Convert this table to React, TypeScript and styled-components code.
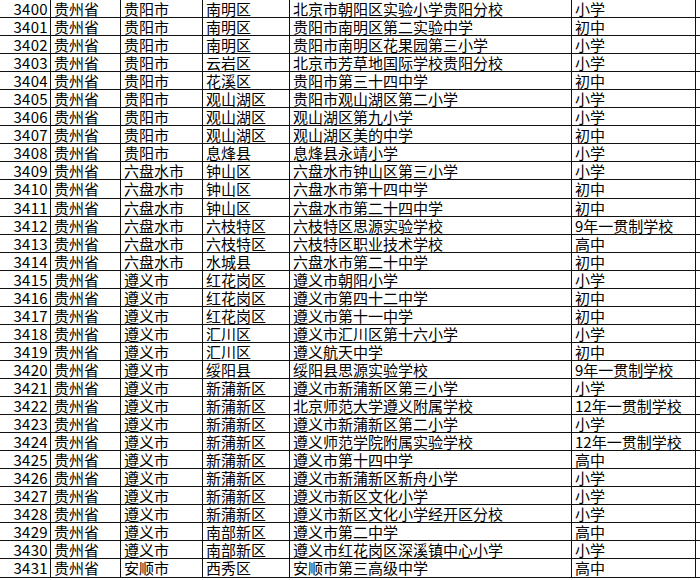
import React from "react";
import styled, { createGlobalStyle } from "styled-components";

const Global = createGlobalStyle`
  html, body { margin: 0; padding: 0; background: #ffffff; }
  body { font-family: "Noto Sans CJK SC", "Noto Sans", sans-serif; }
`;

const COLS = "51px 70px 82px 87px 282px 124px";

const Sheet = styled.div`
  width: 700px;
  height: 580px;
  overflow: hidden;
  background: #ffffff;
`;

const Row = styled.div`
  display: grid;
  grid-template-columns: ${COLS};
  height: 18.06px;
  box-sizing: border-box;
  border-bottom: 1px solid #111;
`;

const Cell = styled.div<{ $num?: boolean }>`
  box-sizing: border-box;
  border-right: 1px solid #111;
  padding: ${(p) => (p.$num ? "0 2px 0 0" : "0 0 0 3px")};
  text-align: ${(p) => (p.$num ? "right" : "left")};
  font-family: "Noto Sans CJK SC", "Noto Sans", sans-serif;
  font-size: 15px;
  line-height: 17px;
  color: #000;
  white-space: nowrap;
  letter-spacing: ${(p) => (p.$num ? "0.3px" : "0")};
`;

const data: [string, string, string, string, string][] = [
  ["贵州省", "贵阳市", "南明区", "北京市朝阳区实验小学贵阳分校", "小学"],
  ["贵州省", "贵阳市", "南明区", "贵阳市南明区第二实验中学", "初中"],
  ["贵州省", "贵阳市", "南明区", "贵阳市南明区花果园第三小学", "小学"],
  ["贵州省", "贵阳市", "云岩区", "北京市芳草地国际学校贵阳分校", "小学"],
  ["贵州省", "贵阳市", "花溪区", "贵阳市第三十四中学", "初中"],
  ["贵州省", "贵阳市", "观山湖区", "贵阳市观山湖区第二小学", "小学"],
  ["贵州省", "贵阳市", "观山湖区", "观山湖区第九小学", "小学"],
  ["贵州省", "贵阳市", "观山湖区", "观山湖区美的中学", "初中"],
  ["贵州省", "贵阳市", "息烽县", "息烽县永靖小学", "小学"],
  ["贵州省", "六盘水市", "钟山区", "六盘水市钟山区第三小学", "小学"],
  ["贵州省", "六盘水市", "钟山区", "六盘水市第十四中学", "初中"],
  ["贵州省", "六盘水市", "钟山区", "六盘水市第二十四中学", "初中"],
  ["贵州省", "六盘水市", "六枝特区", "六枝特区思源实验学校", "9年一贯制学校"],
  ["贵州省", "六盘水市", "六枝特区", "六枝特区职业技术学校", "高中"],
  ["贵州省", "六盘水市", "水城县", "六盘水市第二十中学", "初中"],
  ["贵州省", "遵义市", "红花岗区", "遵义市朝阳小学", "小学"],
  ["贵州省", "遵义市", "红花岗区", "遵义市第四十二中学", "初中"],
  ["贵州省", "遵义市", "红花岗区", "遵义市第十一中学", "初中"],
  ["贵州省", "遵义市", "汇川区", "遵义市汇川区第十六小学", "小学"],
  ["贵州省", "遵义市", "汇川区", "遵义航天中学", "初中"],
  ["贵州省", "遵义市", "绥阳县", "绥阳县思源实验学校", "9年一贯制学校"],
  ["贵州省", "遵义市", "新蒲新区", "遵义市新蒲新区第三小学", "小学"],
  ["贵州省", "遵义市", "新蒲新区", "北京师范大学遵义附属学校", "12年一贯制学校"],
  ["贵州省", "遵义市", "新蒲新区", "遵义市新蒲新区第二小学", "小学"],
  ["贵州省", "遵义市", "新蒲新区", "遵义师范学院附属实验学校", "12年一贯制学校"],
  ["贵州省", "遵义市", "新蒲新区", "遵义市第十四中学", "高中"],
  ["贵州省", "遵义市", "新蒲新区", "遵义市新蒲新区新舟小学", "小学"],
  ["贵州省", "遵义市", "新蒲新区", "遵义市新区文化小学", "小学"],
  ["贵州省", "遵义市", "新蒲新区", "遵义市新区文化小学经开区分校", "小学"],
  ["贵州省", "遵义市", "南部新区", "遵义市第二中学", "高中"],
  ["贵州省", "遵义市", "南部新区", "遵义市红花岗区深溪镇中心小学", "小学"],
  ["贵州省", "安顺市", "西秀区", "安顺市第三高级中学", "高中"],
];

export default function App() {
  return (
    <>
      <Global />
      <Sheet>
        {data.map((r, i) => (
          <Row key={i}>
            <Cell $num>{3400 + i}</Cell>
            {r.map((c, j) => (
              <Cell key={j}>{c}</Cell>
            ))}
          </Row>
        ))}
      </Sheet>
    </>
  );
}
